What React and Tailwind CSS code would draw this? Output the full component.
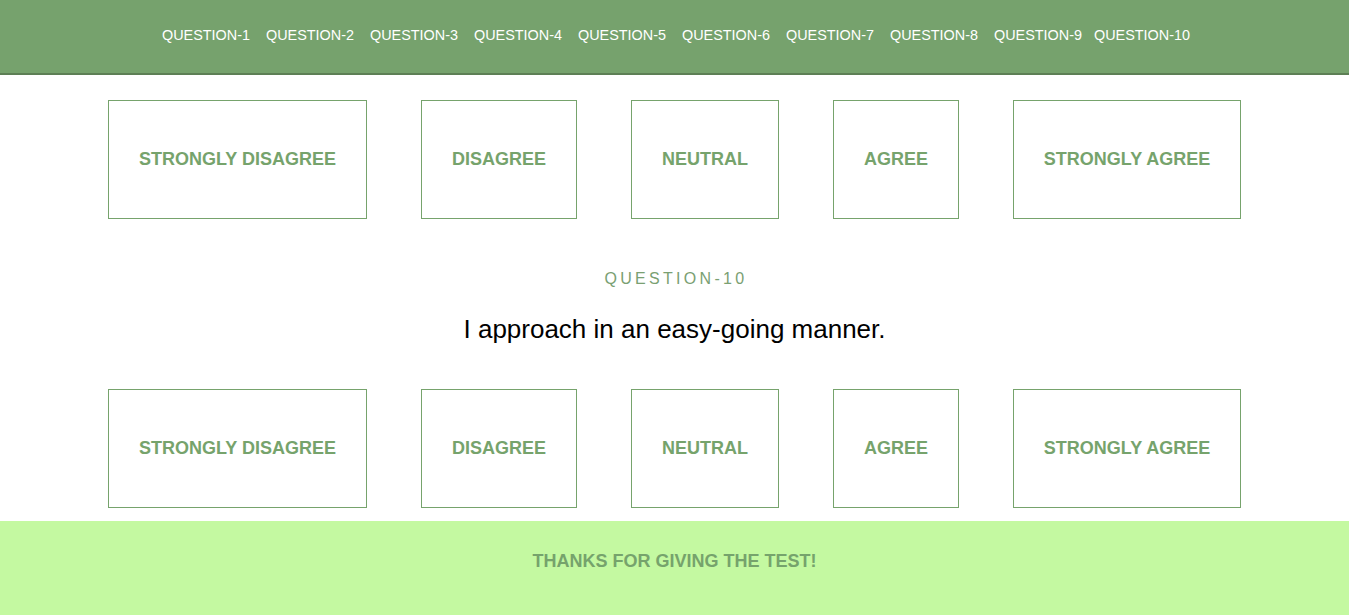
import React from "react";

const questions = [
  "QUESTION-1",
  "QUESTION-2",
  "QUESTION-3",
  "QUESTION-4",
  "QUESTION-5",
  "QUESTION-6",
  "QUESTION-7",
  "QUESTION-8",
  "QUESTION-9",
  "QUESTION-10",
];

const options = [
  { label: "STRONGLY DISAGREE", w: "w-[259px]" },
  { label: "DISAGREE", w: "w-[156px]" },
  { label: "NEUTRAL", w: "w-[148px]" },
  { label: "AGREE", w: "w-[126px]" },
  { label: "STRONGLY AGREE", w: "w-[228px]" },
];

function OptionRow() {
  return (
    <div className="flex justify-center gap-[54px]">
      {options.map((o) => (
        <button
          key={o.label}
          className={`${o.w} h-[119px] border border-[#76a36c] bg-white flex items-center justify-center text-[18px] font-bold text-[#76a36c]`}
        >
          {o.label}
        </button>
      ))}
    </div>
  );
}

export default function App() {
  return (
    <div className="min-h-screen bg-white font-['Liberation_Sans',Arial,sans-serif]">
      {/* nav */}
      <header className="h-[75px] bg-[#76a26d] border-b-2 border-[#5d7f55] flex items-center justify-center pb-[2px]">
        <nav className="flex pl-[3px]">
          {questions.map((q, i) => (
            <a
              key={q}
              className={`text-[14.4px] text-white ${i < 8 ? "w-[104px]" : i === 8 ? "w-[100px]" : ""}`}
            >
              {q}
            </a>
          ))}
        </nav>
      </header>

      <main className="pt-[25px]">
        <OptionRow />

        <div className="mt-[48px] text-center text-[16px] tracking-[3.3px] text-[#7aa072] pl-[3px]">
          QUESTION-10
        </div>
        <p className="mt-[23px] text-center text-[26px] text-black leading-[30px]">
          I approach in an easy-going manner.
        </p>

        <div className="mt-[45px]">
          <OptionRow />
        </div>
      </main>

      <footer className="mt-[13px] h-[94px] bg-[#c4f9a1] pt-[27px] text-center">
        <p className="text-[18px] leading-[27px] font-bold text-[#76a36c]">THANKS FOR GIVING THE TEST!</p>
      </footer>
    </div>
  );
}
